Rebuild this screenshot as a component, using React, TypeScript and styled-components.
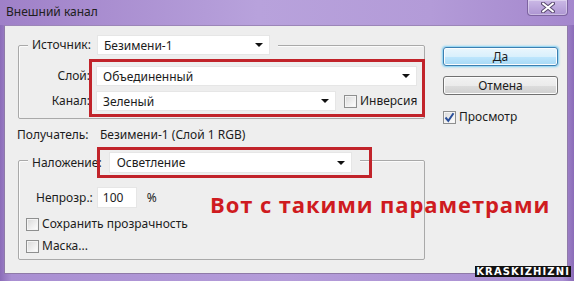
import styled, { createGlobalStyle } from "styled-components";

const GlobalStyle = createGlobalStyle`
  html, body {
    margin: 0;
    padding: 0;
    width: 574px;
    height: 281px;
    overflow: hidden;
    background: #8a6bb5;
  }
  * {
    box-sizing: border-box;
  }
`;

const Window = styled.div`
  position: relative;
  width: 574px;
  height: 281px;
  display: flex;
  flex-direction: column;
  background: linear-gradient(180deg, #a98ad0 0%, #b49bd9 40%, #9a7cc6 85%, #5b3f88 100%);
  font-family: "Noto Sans", "DejaVu Sans", sans-serif;
  font-size: 12px;
  color: #1c1c1c;
`;

const TitleBar = styled.div`
  height: 25px;
  display: flex;
  justify-content: space-between;
  align-items: flex-start;
  padding-left: 6px;
  background: linear-gradient(90deg, #9f80c8 0%, #b8a2dc 45%, #b39bd8 75%, #a487cd 100%);
`;

const Title = styled.div`
  padding-top: 4px;
  line-height: 16px;
  font-size: 12px;
  color: #202020;
`;

const CloseButton = styled.div`
  width: 41px;
  height: 16px;
  margin-right: 6px;
  display: flex;
  align-items: center;
  justify-content: center;
  border: 1px solid #7d64a0;
  border-top: none;
  border-radius: 0 0 4px 4px;
  background: linear-gradient(180deg, #cbb9e6 0%, #ad95d2 100%);
  box-shadow: inset 0 0 0 1px rgba(255, 255, 255, 0.35);
`;

const Frame = styled.div`
  flex: 1;
  display: flex;
  padding: 0 6px 7px 4px;
  background: linear-gradient(90deg, #8b6cb8 0%, #a98fd2 2%, #b49cd9 50%, #a98fd2 98%, #8b6cb8 100%);
`;

const Client = styled.div`
  position: relative;
  flex: 1;
  display: flex;
  padding-left: 13px;
  background: #eeeeee;
  border: 1px solid #8f7aa8;
  border-top-color: #9c86b8;
`;

const LeftColumn = styled.div`
  width: 407px;
  padding-top: 19px;
  display: flex;
  flex-direction: column;
`;

const RightColumn = styled.div`
  width: 115px;
  margin-left: 18px;
  padding-top: 21px;
  display: flex;
  flex-direction: column;
`;

const Group = styled.div<{ $pb: number }>`
  width: 407px;
  border: 1px solid #a9a9a9;
  border-radius: 2px;
  padding-bottom: ${(p) => p.$pb}px;
  box-shadow: inset 1px 1px 0 #fbfbfb;
`;

const GroupHeader = styled.div<{ $top: number; $gap: number }>`
  display: flex;
  align-items: center;
  width: fit-content;
  margin-top: ${(p) => p.$top}px;
  margin-left: 9px;
  padding: 0 8px 0 4px;
  gap: ${(p) => p.$gap}px;
  background: #eeeeee;
`;

const Label = styled.span`
  white-space: nowrap;
  line-height: 16px;
`;

const Select = styled.div<{ $w: number; $h?: number; $pad?: number }>`
  width: ${(p) => p.$w}px;
  height: ${(p) => p.$h ?? 20}px;
  display: flex;
  align-items: center;
  justify-content: space-between;
  padding: 0 6px 0 ${(p) => p.$pad ?? 6}px;
  background: #ffffff;
  border: 1px solid #e6e6e6;
  white-space: nowrap;

  &::after {
    content: "";
    border-left: 4px solid transparent;
    border-right: 4px solid transparent;
    border-top: 4px solid #111;
  }
`;

const FieldGrid = styled.div`
  display: grid;
  grid-template-columns: 71px auto;
  column-gap: 6px;
  row-gap: 5px;
  margin-top: 11px;
  align-items: center;

  & > ${Label} {
    text-align: right;
  }
`;

const InlineRow = styled.div<{ $gap: number }>`
  display: flex;
  align-items: center;
  gap: ${(p) => p.$gap}px;
`;

const InfoRow = styled.div`
  display: flex;
  align-items: center;
  height: 16px;
  margin: 8px 0 0 -1px;
`;

const InfoLabel = styled.span`
  width: 83px;
  line-height: 16px;
`;

const Spacer = styled.div<{ $h: number }>`
  height: ${(p) => p.$h}px;
`;

const OpacityRow = styled.div`
  display: flex;
  align-items: center;
  gap: 4px;
  margin: 14px 0 0 17px;
`;

const NumberField = styled.div`
  width: 40px;
  height: 21px;
  display: flex;
  align-items: center;
  padding-left: 5px;
  background: #ffffff;
  border: 1px solid #e6e6e6;
`;

const Percent = styled.span`
  margin-left: 6px;
`;

const CheckRow = styled.label<{ $top: number; $left?: number }>`
  display: flex;
  align-items: center;
  gap: 3px;
  height: 16px;
  margin-top: ${(p) => p.$top}px;
  margin-left: ${(p) => p.$left ?? 0}px;
`;

const Box = styled.span`
  width: 13px;
  height: 13px;
  flex: none;
  display: flex;
  align-items: center;
  justify-content: center;
  border: 1px solid #8e8f8f;
  background: linear-gradient(135deg, #d8d8d8 0%, #f4f4f4 70%, #ffffff 100%);
  box-shadow: inset 0 0 0 1px #f4f4f4;
`;

const Button = styled.div<{ $primary?: boolean }>`
  height: 19px;
  display: flex;
  align-items: center;
  justify-content: center;
  border-radius: 3px;
  line-height: 16px;
  border: 1px solid ${(p) => (p.$primary ? "#3c7fb1" : "#707070")};
  background: ${(p) =>
    p.$primary
      ? "linear-gradient(180deg, #eaf6fd 0%, #d9f0fc 50%, #bee6fd 51%, #a7d9f5 100%)"
      : "linear-gradient(180deg, #f2f2f2 0%, #ebebeb 50%, #dddddd 51%, #cfcfcf 100%)"};
  box-shadow: ${(p) =>
    p.$primary ? "0 0 2px 1px #7fd0f5, inset 0 0 0 1px #fcfcfc" : "inset 0 0 0 1px #fcfcfc"};

  & + & {
    margin-top: 10px;
  }
`;

const Highlight = styled.div<{ $l: number; $t: number; $w: number; $h: number }>`
  position: absolute;
  left: ${(p) => p.$l}px;
  top: ${(p) => p.$t}px;
  width: ${(p) => p.$w}px;
  height: ${(p) => p.$h}px;
  border: 3px solid #c1232a;
  pointer-events: none;
`;

const Annotation = styled.div`
  position: absolute;
  left: 205px;
  top: 164px;
  font-family: "Open Sans", "DejaVu Sans", sans-serif;
  font-weight: 700;
  font-size: 22px;
  line-height: 28px;
  letter-spacing: 0.9px;
  color: #cf1b1f;
  white-space: nowrap;
`;

const Watermark = styled.div`
  position: absolute;
  right: 3px;
  bottom: 4px;
  height: 11px;
  padding: 0 1px;
  background: #111;
  font-family: "DejaVu Sans", sans-serif;
  font-weight: 700;
  font-size: 10px;
  line-height: 11px;
  color: #fff;
  letter-spacing: 1.1px;
`;

const Check = ({ checked }: { checked?: boolean }) => (
  <Box>
    {checked && (
      <svg width="11" height="11" viewBox="0 0 11 11">
        <path d="M1.5 5.5 L4.3 8.8 L9.5 1.3" fill="none" stroke="#2a4f9a" strokeWidth="2" />
      </svg>
    )}
  </Box>
);

export default function App() {
  return (
    <>
      <GlobalStyle />
      <Window>
        <TitleBar>
          <Title>Внешний канал</Title>
          <CloseButton>
            <svg width="14" height="11" viewBox="0 0 14 11">
              <path
                d="M2 1.5 L12 9.5 M12 1.5 L2 9.5"
                stroke="#5a4a70"
                strokeWidth="4"
                strokeLinecap="round"
              />
              <path
                d="M2 1.5 L12 9.5 M12 1.5 L2 9.5"
                stroke="#ffffff"
                strokeWidth="2"
                strokeLinecap="round"
              />
            </svg>
          </CloseButton>
        </TitleBar>
        <Frame>
          <Client>
            <LeftColumn>
              <Group $pb={7}>
                <GroupHeader $top={-11} $gap={6}>
                  <Label>Источник:</Label>
                  <Select $w={173}>Безимени-1</Select>
                </GroupHeader>
                <FieldGrid>
                  <Label>Слой:</Label>
                  <Select $w={321}>Объединенный</Select>
                  <Label>Канал:</Label>
                  <InlineRow $gap={8}>
                    <Select $w={240}>Зеленый</Select>
                    <CheckRow $top={0}>
                      <Check />
                      <Label>Инверсия</Label>
                    </CheckRow>
                  </InlineRow>
                </FieldGrid>
              </Group>

              <InfoRow>
                <InfoLabel>Получатель:</InfoLabel>
                <Label>Безимени-1 (Слой 1 RGB)</Label>
              </InfoRow>

              <Spacer $h={17} />

              <Group $pb={5}>
                <GroupHeader $top={-9} $gap={7}>
                  <Label>Наложение:</Label>
                  <Select $w={243} $h={21} $pad={7}>
                    Осветление
                  </Select>
                </GroupHeader>
                <OpacityRow>
                  <Label>Непрозр.:</Label>
                  <NumberField>100</NumberField>
                  <Percent>%</Percent>
                </OpacityRow>
                <CheckRow $top={8} $left={7}>
                  <Check />
                  <Label>Сохранить прозрачность</Label>
                </CheckRow>
                <CheckRow $top={6} $left={7}>
                  <Check />
                  <Label>Маска...</Label>
                </CheckRow>
              </Group>
            </LeftColumn>

            <RightColumn>
              <Button $primary>Да</Button>
              <Button>Отмена</Button>
              <CheckRow $top={14}>
                <Check checked />
                <Label>Просмотр</Label>
              </CheckRow>
            </RightColumn>

            <Highlight $l={84} $t={33} $w={336} $h={58} />
            <Highlight $l={92} $t={121} $w={275} $h={31} />
            <Annotation>Вот с такими параметрами</Annotation>
          </Client>
        </Frame>
        <Watermark>KRASKIZHIZNI</Watermark>
      </Window>
    </>
  );
}
